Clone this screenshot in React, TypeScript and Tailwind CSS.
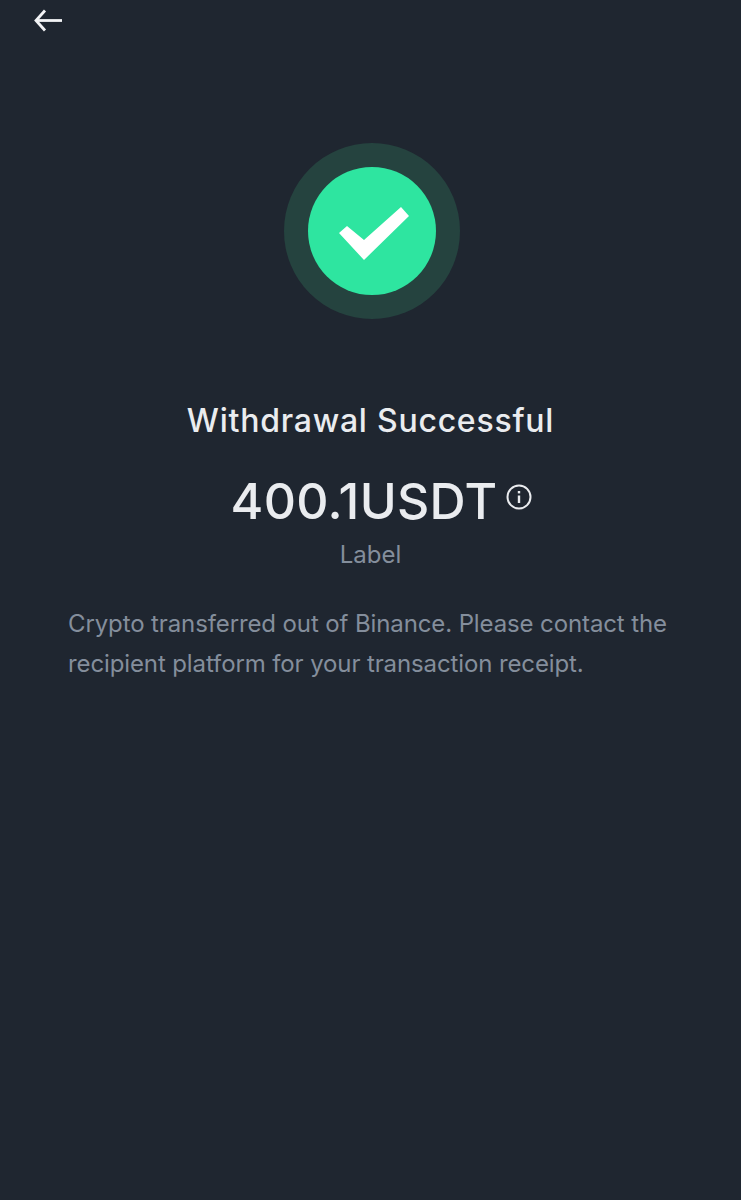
import React from 'react';

const SuccessBadge = () => (
  <div className="flex h-[176px] w-[176px] items-center justify-center rounded-full bg-[#25433f]">
    <div className="h-[128px] w-[128px] rounded-full bg-[#2ee5a0]">
      <svg width="128" height="128" viewBox="0 0 128 128">
        <polygon points="31,66 39,59 56,73 93,40 101,49 56,93" fill="#ffffff" />
      </svg>
    </div>
  </div>
);

export default function App() {
  return (
    <div className="flex h-[1200px] w-[741px] flex-col bg-[#1f2630] font-['Inter',sans-serif]">
      <div className="pl-[33px] pt-[9px]">
        <svg width="30" height="24" viewBox="0 0 30 24" fill="none" stroke="#f2f3f5" strokeWidth="2.8">
          <path d="M3 11.5H29" />
          <path d="M12 1.5L3 11.5L12 21.5" />
        </svg>
      </div>

      <div className="mt-[110px] flex justify-center pl-[3px]">
        <SuccessBadge />
      </div>

      <h1 className="mt-[82px] text-center text-[32px] leading-[40px] font-medium tracking-[0.76px] text-[#eaecef]">Withdrawal Successful</h1>

      <div className="mt-[30px] flex items-center justify-center pl-[22px]">
        <span className="text-[50px] leading-[60px] font-medium tracking-[0.3px] text-[#eaecef]">400.1USDT</span>
        <svg className="ml-[9px] mb-[8px]" width="26" height="26" viewBox="0 0 26 26" fill="none" stroke="#eaecef" strokeWidth="2">
          <circle cx="13" cy="13" r="11.5" />
          <path d="M13 11.5V19" strokeWidth="2.4" />
          <path d="M13 7V9.4" strokeWidth="2.4" />
        </svg>
      </div>

      <p className="mt-[8px] text-center text-[24px] leading-[32px] text-[#848e9c]">Label</p>

      <p className="mt-[33px] px-[68px] text-[24px] leading-[40px] tracking-[-0.115px] text-[#848e9c]">
        Crypto transferred out of Binance. Please contact the recipient platform for your transaction receipt.
      </p>
    </div>
  );
}
